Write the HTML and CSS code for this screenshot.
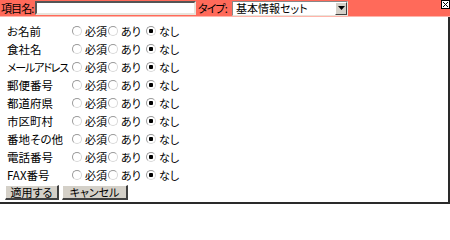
FILE: index.html
```html
<!DOCTYPE html>
<html lang="ja">
<head>
<meta charset="utf-8">
<link rel="stylesheet" href="styles.css">
</head>
<body>
<div class="panel">
  <div class="header">
    <span class="hlabel">項目名:</span>
    <span class="field"></span>
    <span class="hlabel type">タイプ:</span>
    <span class="select"><span class="select-text">基本情報セット</span><span class="select-btn"><svg width="7" height="4" viewBox="0 0 7 4"><path d="M0 0H7L3.5 4Z" fill="#000"/></svg></span></span>
    <span class="close"><svg width="9" height="9" viewBox="0 0 9 9"><rect x="0.5" y="0.5" width="8" height="8" fill="#fff" stroke="#000"/><path d="M2 2L7 7M7 2L2 7" stroke="#000" stroke-width="1"/></svg></span>
  </div>
  <div class="rows">
    <div class="row"><span class="name">お名前</span><label class="opt"><span class="radio"></span>必須</label><label class="opt"><span class="radio"></span>あり</label><label class="opt"><span class="radio on"></span>なし</label></div>
    <div class="row"><span class="name">食社名</span><label class="opt"><span class="radio"></span>必須</label><label class="opt"><span class="radio"></span>あり</label><label class="opt"><span class="radio on"></span>なし</label></div>
    <div class="row"><span class="name kana">メールアドレス</span><label class="opt"><span class="radio"></span>必須</label><label class="opt"><span class="radio"></span>あり</label><label class="opt"><span class="radio on"></span>なし</label></div>
    <div class="row"><span class="name">郵便番号</span><label class="opt"><span class="radio"></span>必須</label><label class="opt"><span class="radio"></span>あり</label><label class="opt"><span class="radio on"></span>なし</label></div>
    <div class="row"><span class="name">都道府県</span><label class="opt"><span class="radio"></span>必須</label><label class="opt"><span class="radio"></span>あり</label><label class="opt"><span class="radio on"></span>なし</label></div>
    <div class="row"><span class="name">市区町村</span><label class="opt"><span class="radio"></span>必須</label><label class="opt"><span class="radio"></span>あり</label><label class="opt"><span class="radio on"></span>なし</label></div>
    <div class="row"><span class="name">番地その他</span><label class="opt"><span class="radio"></span>必須</label><label class="opt"><span class="radio"></span>あり</label><label class="opt"><span class="radio on"></span>なし</label></div>
    <div class="row"><span class="name">電話番号</span><label class="opt"><span class="radio"></span>必須</label><label class="opt"><span class="radio"></span>あり</label><label class="opt"><span class="radio on"></span>なし</label></div>
    <div class="row"><span class="name">FAX番号</span><label class="opt"><span class="radio"></span>必須</label><label class="opt"><span class="radio"></span>あり</label><label class="opt"><span class="radio on"></span>なし</label></div>
  </div>
  <div class="buttons">
    <span class="btn apply">適用する</span>
    <span class="btn cancel">キャンセル</span>
  </div>
</div>
</body>
</html>
```
FILE: styles.css
```css
html, body {
  margin: 0;
  padding: 0;
  background: #fff;
}
body {
  font-family: "Noto Sans CJK JP", "Liberation Sans", sans-serif;
  font-size: 11px;
  font-feature-settings: "palt";
  color: #000;
}
.panel {
  box-sizing: border-box;
  width: 450px;
  height: 204px;
  box-shadow: inset -2px -2px 0 #2a2a2a;
  display: flex;
  flex-direction: column;
}
.header {
  flex-shrink: 0;
  height: 16px;
  background: #ff6a5a;
  border-bottom: 1px solid #ffb4aa;
  display: flex;
  align-items: center;
  padding-left: 1px;
}
.hlabel {
  line-height: 14px;
  width: 34px;
  flex-shrink: 0;
  white-space: nowrap;
  font-size: 11px;
  letter-spacing: -0.9px;
}
.hlabel.type {
  width: 34px;
  margin-left: 2px;
}
.field {
  flex-shrink: 0;
  width: 157px;
  height: 10px;
  background: #fff;
  border-top: 2px solid #555;
  border-left: 2px solid #555;
  border-bottom: 2px solid #e8e4dc;
  border-right: 2px solid #e8e4dc;
}
.select {
  flex-shrink: 0;
  width: 114px;
  height: 13px;
  background: #fff;
  border: 1px solid #888;
  border-right-color: #e8e4dc;
  border-bottom-color: #e8e4dc;
  display: flex;
  align-items: stretch;
}
.select-text {
  flex: 1;
  line-height: 13px;
  padding-left: 3px;
  font-size: 11px;
  white-space: nowrap;
}
.select-btn {
  width: 12px;
  background: #d4d0c8;
  border-top: 1px solid #fff;
  border-left: 1px solid #fff;
  border-right: 1px solid #404040;
  border-bottom: 1px solid #404040;
  box-sizing: border-box;
  display: flex;
  align-items: center;
  justify-content: center;
}
.close {
  margin-left: auto;
  align-self: flex-start;
  height: 9px;
  display: flex;
}
.rows {
  padding-top: 5px;
  display: flex;
  flex-direction: column;
}
.row {
  height: 18px;
  display: flex;
  align-items: center;
  padding-left: 7px;
}
.name {
  width: 65px;
  flex-shrink: 0;
  white-space: nowrap;
  font-size: 11.5px;
}
.name.kana {
  font-size: 11px;
  letter-spacing: -1.2px;
}
.opt {
  display: flex;
  align-items: center;
  flex-shrink: 0;
  white-space: nowrap;
  font-size: 11px;
}
.opt:nth-child(2) { width: 36px; }
.opt:nth-child(3) { width: 38px; }
.radio {
  flex-shrink: 0;
  width: 8px;
  height: 8px;
  border-radius: 50%;
  border: 1px solid #9a9a9a;
  border-right-color: #d8d8d8;
  border-bottom-color: #d8d8d8;
  background: #fff;
  margin-right: 3px;
  box-sizing: content-box;
}
.radio.on {
  background: radial-gradient(circle, #000 0 2px, #fff 2.5px);
}
.buttons {
  display: flex;
  gap: 3px;
  padding-left: 5px;
  margin-top: 1px;
}
.btn {
  height: 15px;
  box-sizing: border-box;
  background: #d4d0c8;
  border-top: 1px solid #fff;
  border-left: 1px solid #fff;
  border-right: 2px solid #404040;
  border-bottom: 2px solid #404040;
  display: flex;
  align-items: center;
  justify-content: center;
  font-size: 11px;
  line-height: 12px;
}
.apply { width: 54px; }
.cancel { width: 66px; }
```
